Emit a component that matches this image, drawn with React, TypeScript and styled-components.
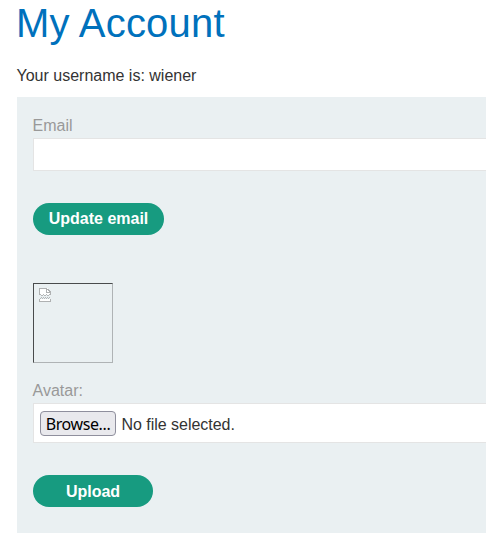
import React from "react";
import styled, { createGlobalStyle } from "styled-components";

const Global = createGlobalStyle`
  * { box-sizing: border-box; }
  html, body { margin: 0; background: #fff; overflow: hidden; }
  body { font-family: "Liberation Sans", Arial, sans-serif; font-size: 16px; line-height: 20px; color: #333; }
`;

const Page = styled.main`
  width: 486px;
  height: 533px;
  padding-left: 17px;
  overflow: hidden;
`;

const Title = styled.h1`
  margin: 0 0 0 -1px;
  height: 46px;
  font-size: 40px;
  line-height: 46px;
  letter-spacing: 0.2px;
  font-weight: 400;
  color: #0071bc;
`;

const Intro = styled.p`
  margin: 20px 0 11px -0.5px;
`;

const Panel = styled.section`
  height: 436px;
  padding: 18px 0 0 16px;
  background: #eaf0f2;
`;

const Label = styled.label<{ $height: number; $drop?: number }>`
  display: block;
  height: ${(p) => p.$height}px;
  margin-left: -0.5px;
  padding-top: ${(p) => p.$drop ?? 0}px;
  color: #999;
`;

const Field = styled.div<{ $height: number }>`
  display: flex;
  align-items: center;
  height: ${(p) => p.$height}px;
  padding-left: 6px;
  border: 1px solid #e4e4e4;
  border-right: 0;
  background: #fff;
`;

const EmailInput = styled.input`
  width: 100%;
  border: 0;
  outline: 0;
  font: inherit;
`;

const Pill = styled.button<{ $width: number; $drop?: number }>`
  display: block;
  width: ${(p) => p.$width}px;
  height: 32px;
  margin-top: 32px;
  padding: ${(p) => p.$drop ?? 0}px 0 0;
  border: 0;
  border-radius: 16px;
  background: #179b80;
  color: #fff;
  font: bold 16px/32px "Liberation Sans", Arial, sans-serif;
`;

const Avatar = styled.div`
  width: 80px;
  height: 80px;
  margin: 48px 0 18px;
  padding: 4px 5px;
  border: 1px solid;
  border-color: #494b4c #afb3b5 #afb3b5 #494b4c;
`;

const Browse = styled.button`
  width: 76px;
  height: 25px;
  margin-right: 5.5px;
  padding: 1px 0 0;
  border: 1px solid #8f8f9d;
  border-radius: 4px;
  background: #e9e9ed;
  color: #000;
  font: 16px/22px "Noto Sans", sans-serif;
  letter-spacing: -0.4px;
`;

const FileName = styled.span`
  padding-top: 3px;
  letter-spacing: -0.03px;
`;

const IconSvg = styled.svg`
  display: block;
`;

const BrokenImage = () => (
  <IconSvg width="12" height="14" viewBox="0 0 12 14" fill="none" shapeRendering="crispEdges">
    <path d="M0 0h8l4 4v3H0zM0 11h12v3H0z" fill="#fff" />
    <path d="M.5 7V.5H8M7.5 0v5M7 4.5h5M8 1.5h2M9 2.5h2M10 3.5h2M11.5 4v3M.5 10.5v3h11v-3" stroke="#afb1b2" />
    <path d="M1 6h1v1H1zM2 7h2v1H2zM4 6h1v1H4zM5 7h2v1H5zM7 6h1v1H7zM8 7h2v1H8zM10 6h1v1h-1zM1 10h1v1H1zM2 9h1v1H2zM3 10h1v1H3zM4 9h1v1H4zM5 10h1v1H5zM6 9h1v1H6zM7 10h1v1H7zM8 9h1v1H8zM9 10h1v1H9zM10 9h1v1h-1z" fill="#b5b7b8" />
  </IconSvg>
);

export default function App() {
  return (
    <Page>
      <Global />
      <Title>My Account</Title>
      <Intro>Your username is: wiener</Intro>
      <Panel>
        <Label htmlFor="email" $height={23} $drop={1}>Email</Label>
        <Field $height={33}><EmailInput id="email" /></Field>
        <Pill $width={131}>Update email</Pill>
        <Avatar><BrokenImage /></Avatar>
        <Label as="div" $height={22}>Avatar:</Label>
        <Field $height={40}><Browse>Browse...</Browse><FileName>No file selected.</FileName></Field>
        <Pill $width={120} $drop={1}>Upload</Pill>
      </Panel>
    </Page>
  );
}
